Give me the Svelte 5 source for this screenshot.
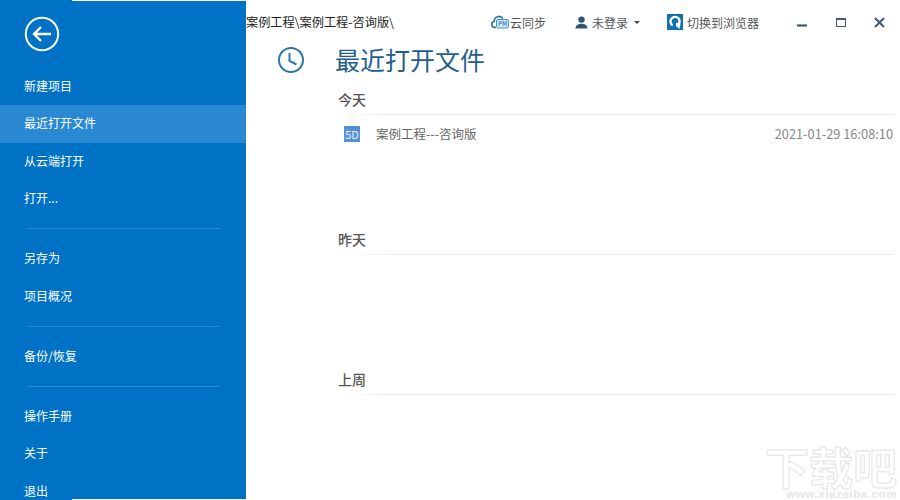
<script>
  const groups = [
    ['新建项目', '最近打开文件', '从云端打开', '打开...'],
    ['另存为', '项目概况'],
    ['备份/恢复'],
    ['操作手册', '关于', '退出']
  ];
  const active = '最近打开文件';
  const sections = [
    { label: '今天', items: [{ name: '案例工程---咨询版', time: '2021-01-29 16:08:10' }] },
    { label: '昨天', items: [] },
    { label: '上周', items: [] }
  ];
</script>

<div class="window">
  <aside class="sidebar">
    <div class="back">
      <svg width="36" height="36" viewBox="0 0 36 36" fill="none" stroke="#fff">
        <circle cx="18" cy="18" r="16.2" stroke-width="2" />
        <path d="M27 18H10M17 11l-7 7 7 7" stroke-width="2.4" />
      </svg>
    </div>
    {#each groups as group, i}
      {#if i > 0}<div class="divider"></div>{/if}
      {#each group as item}
        <div class="nav" class:active={item === active}>{item}</div>
      {/each}
    {/each}
  </aside>

  <main>
    <header>
      <div class="path">案例工程\案例工程-咨询版\</div>
      <div class="tools">
        <div class="tool sync">
          <svg width="18" height="14" viewBox="0 0 18 14">
            <path d="M5 12.5H3.8A3.2 3.2 0 0 1 3.2 6.2 4.8 4.8 0 0 1 12 3.6" fill="none" stroke="#2a6f9e" stroke-width="1.6" />
            <rect x="5.5" y="4.5" width="12" height="8.5" rx="1.5" fill="#d8e9f6" stroke="#3d8fd0" />
            <text x="11.5" y="11" class="pm">PM</text>
          </svg>
          云同步
        </div>
        <div class="tool user">
          <svg width="13" height="13" viewBox="0 0 13 13" fill="#2f5573">
            <circle cx="6.5" cy="3.6" r="3.2" />
            <path d="M0.5 12.5c0-3.2 2.6-4.8 6-4.8s6 1.6 6 4.8z" />
          </svg>
          未登录
          <span class="caret"></span>
        </div>
        <div class="tool browser">
          <svg width="16" height="16" viewBox="0 0 16 16">
            <rect width="16" height="16" fill="#0f6fb0" />
            <path d="M5.6 11.4A4.6 4.6 0 1 1 11 11" fill="none" stroke="#fff" stroke-width="2.4" />
            <path d="M9 8.5l4.5 1.5-1 5-3.5-3z" fill="#fff" />
          </svg>
          切换到浏览器
        </div>
        <div class="controls">
          <svg width="39" height="16" viewBox="0 0 39 16"><path d="M15 11.5h10" stroke="#3f5a6e" stroke-width="2.2" /></svg>
          <svg width="39" height="16" viewBox="0 0 39 16" fill="none"><rect x="15.5" y="4.5" width="9" height="8" stroke="#3f5a6e" /><path d="M15 5h10" stroke="#3f5a6e" stroke-width="2" /></svg>
          <svg width="39" height="16" viewBox="0 0 39 16"><path d="M15 4l9 9M24 4l-9 9" stroke="#3f5a6e" stroke-width="2" /></svg>
        </div>
      </div>
    </header>

    <div class="title-row">
      <svg class="clock" width="26" height="26" viewBox="0 0 26 26" fill="none" stroke="#2b76a8" stroke-width="2">
        <circle cx="13" cy="13" r="12" />
        <path d="M11.5 6v8l7 3.5" />
      </svg>
      <h1>最近打开文件</h1>
    </div>

    {#each sections as section}
      <section>
        <h2>{section.label}</h2>
        {#each section.items as item}
          <div class="file">
            <span class="badge">5D</span>
            <span class="name">{item.name}</span>
            <span class="time">{item.time}</span>
          </div>
        {/each}
      </section>
    {/each}
  </main>

  <div class="watermark">
    <div class="mark">下载吧</div>
    <div class="url">www.xiazaiba.com</div>
  </div>
</div>

<style>
  :global(body) {
    margin: 0;
    background: #fff;
  }

  .window {
    position: relative;
    display: flex;
    width: 900px;
    height: 500px;
    overflow: hidden;
    font-family: "Noto Sans CJK SC", "Noto Sans", sans-serif;
    font-size: 12px;
  }

  .sidebar {
    position: relative;
    flex: 0 0 246px;
    height: 500px;
    overflow: hidden;
    background: #0072c6;
    color: #fff;
  }

  /* thin light edge the capture leaves on top and bottom */
  .sidebar::before,
  .sidebar::after {
    content: "";
    position: absolute;
    left: 72px;
    right: 0;
    height: 1px;
    background: #fff;
  }

  .sidebar::before {
    top: 0;
  }

  .sidebar::after {
    bottom: 0;
  }

  .back {
    display: flex;
    align-items: center;
    height: 67.5px;
    padding-left: 24px;
  }

  .nav {
    height: 37.5px;
    line-height: 36.5px;
    padding-left: 24px;
  }

  .nav.active {
    background: #2b88d2;
  }

  .divider {
    height: 1px;
    margin: 10.5px 26px 11px 27px;
    background: #2a87d3;
  }

  main {
    flex: 1;
    min-width: 0;
  }

  header {
    display: flex;
    align-items: center;
    justify-content: space-between;
    height: 44px;
    color: #444;
  }

  .path {
    font-size: 12.2px;
    color: #222;
  }

  .tools {
    display: flex;
    align-items: center;
    margin-right: 1px;
  }

  .tool {
    display: flex;
    align-items: center;
    gap: 4px;
    color: #555;
  }

  .sync {
    gap: 1px;
  }

  .pm {
    font-size: 6px;
    font-weight: 700;
    text-anchor: middle;
    fill: #3d8fd0;
  }

  .user {
    margin-left: 29px;
  }

  .browser {
    margin-left: 27px;
  }

  .caret {
    width: 0;
    height: 0;
    margin-left: 2px;
    border: 3px solid transparent;
    border-top: 3px solid #444;
    border-bottom: 0;
  }

  .controls {
    display: flex;
    margin-left: 23px;
  }

  .title-row {
    display: flex;
    align-items: center;
    height: 32px;
    padding-left: 32px;
  }

  .clock {
    flex: none;
  }

  h1 {
    margin: 0 0 0 31px;
    padding-bottom: 3px;
    font-size: 25px;
    font-weight: 400;
    color: #1f5f8b;
  }

  section {
    height: 140px;
    margin: 0 7px 0 92px;
  }

  section:first-of-type {
    margin-top: 8px;
  }

  h2 {
    position: relative;
    margin: 0;
    height: 31px;
    line-height: 30px;
    font-size: 14px;
    font-weight: 500;
    color: #555;
  }

  h2::after {
    content: "";
    position: absolute;
    left: 0;
    right: 0;
    bottom: 0;
    height: 1px;
    background: linear-gradient(to right, #fff, #e8eaec 60px);
  }

  .file {
    display: flex;
    align-items: center;
    height: 38px;
    padding-left: 6px;
    color: #666;
  }

  .badge {
    width: 16px;
    height: 16px;
    line-height: 16px;
    text-align: center;
    font-size: 11px;
    color: #e8f0fa;
    background: #5592d4;
  }

  .name {
    flex: 1;
    margin-left: 16px;
    padding-bottom: 2px;
    font-size: 12.5px;
  }

  .time {
    padding-bottom: 2px;
    font-size: 12.8px;
    color: #888;
  }

  .watermark {
    position: absolute;
    right: 3px;
    bottom: 1px;
    width: 132px;
    text-align: right;
    color: #e6e6e6;
  }

  .mark {
    font-size: 44px;
    line-height: 46px;
    font-weight: 700;
    color: #fff;
    -webkit-text-stroke: 1px #e4e4e4;
  }

  .url {
    font-family: "Liberation Sans", sans-serif;
    font-size: 11.5px;
    line-height: 10px;
    font-weight: 700;
    letter-spacing: 0.6px;
  }
</style>
